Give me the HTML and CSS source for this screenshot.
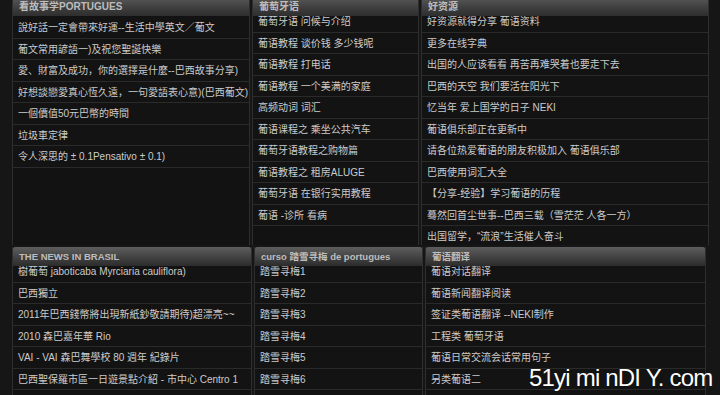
FILE: index.html
```html
<!DOCTYPE html>
<html lang="zh">
<head>
    <meta charset="UTF-8">
    <meta name="viewport" content="width=device-width, initial-scale=1.0">
    <title>葡语资源</title>
    <link rel="stylesheet" href="styles.css">
</head>
<body>
    <div class="page">
        <div class="row-top">
            <div class="panel">
                <div class="panel-head">看故事学PORTUGUES</div>
                <ul class="list">
                    <li>說好話一定會帶來好運--生活中學英文／葡文</li>
                    <li>葡文常用諺語一)及祝您聖誕快樂</li>
                    <li>愛、財富及成功，你的選擇是什麼--巴西故事分享)</li>
                    <li>好想談戀愛真心恆久遠，一句愛語表心意)(巴西葡文)</li>
                    <li>一個價值50元巴幣的時間</li>
                    <li>垃圾車定律</li>
                    <li>令人深思的 ± 0.1Pensativo ± 0.1)</li>
                </ul>
            </div>
            <div class="panel">
                <div class="panel-head">葡萄牙语</div>
                <ul class="list list-up">
                    <li>葡萄牙语 问候与介绍</li>
                    <li>葡语教程 谈价钱 多少钱呢</li>
                    <li>葡语教程 打电话</li>
                    <li>葡语教程 一个美满的家庭</li>
                    <li>高频动词 词汇</li>
                    <li>葡语课程之 乘坐公共汽车</li>
                    <li>葡萄牙语教程之购物篇</li>
                    <li>葡语教程之 租房ALUGE</li>
                    <li>葡萄牙语 在银行实用教程</li>
                    <li>葡语 -诊所 看病</li>
                </ul>
            </div>
            <div class="panel">
                <div class="panel-head">好资源</div>
                <ul class="list list-up">
                    <li>好资源就得分享 葡语资料</li>
                    <li>更多在线字典</li>
                    <li>出国的人应该看看 再苦再难哭着也要走下去</li>
                    <li>巴西的天空 我们要活在阳光下</li>
                    <li>忆当年 爱上国学的日子 NEKI</li>
                    <li>葡语俱乐部正在更新中</li>
                    <li>请各位热爱葡语的朋友积极加入 葡语俱乐部</li>
                    <li>巴西使用词汇大全</li>
                    <li>【分享-经验】学习葡语的历程</li>
                    <li>蓦然回首尘世事--巴西三载（雪茫茫 人各一方）</li>
                    <li>出国留学，“流浪”生活催人奋斗</li>
                </ul>
            </div>
        </div>

        <div class="row-bottom">
            <div class="panel">
                <div class="panel-head head-big">THE NEWS IN BRASIL</div>
                <ul class="list list-up">
                    <li>樹葡萄 jaboticaba Myrciaria cauliflora)</li>
                    <li>巴西獨立</li>
                    <li>2011年巴西錢幣將出現新紙鈔敬請期待)超漂亮~~</li>
                    <li>2010 森巴嘉年華 Rio</li>
                    <li>VAI - VAI 森巴舞學校 80 週年 紀錄片</li>
                    <li>巴西聖保羅市區一日遊景點介紹 - 市中心 Centro 1</li>
                </ul>
            </div>
            <div class="panel">
                <div class="panel-head head-big">curso 踏雪寻梅 de portugues</div>
                <ul class="list list-up">
                    <li>踏雪寻梅1</li>
                    <li>踏雪寻梅2</li>
                    <li>踏雪寻梅3</li>
                    <li>踏雪寻梅4</li>
                    <li>踏雪寻梅5</li>
                    <li>踏雪寻梅6</li>
                </ul>
            </div>
            <div class="panel">
                <div class="panel-head head-big">葡语翻译</div>
                <ul class="list list-up">
                    <li>葡语对话翻译</li>
                    <li>葡语新闻翻译阅读</li>
                    <li>签证类葡语翻译 --NEKI制作</li>
                    <li>工程类 葡萄牙语</li>
                    <li>葡语日常交流会话常用句子</li>
                    <li>另类葡语二</li>
                </ul>
            </div>
        </div>
    </div>

    <div class="watermark">51yi mi nDI Y. com</div>
</body>
</html>
```

FILE: styles.css
```css
body {
    margin: 0;
    padding: 0;
    background-color: #161616;
    color: #cbcbcb;
    font-family: "Liberation Sans", "Noto Sans CJK SC", sans-serif;
    font-size: 10px;
    overflow: hidden;
}
.page {
    padding-left: 12px;
    height: 395px;
}
.row-top {
    display: grid;
    grid-template-columns: 238px 167px 288px;
    gap: 2px;
    height: 245px;
}
.row-bottom {
    display: grid;
    grid-template-columns: 240px 169px 281px;
    gap: 2px;
    margin-top: 2px;
    height: 148px;
}
.panel {
    background: #121212;
    border-left: 1px solid #2e2e2e;
    border-right: 1px solid #2e2e2e;
    overflow: hidden;
}
.panel-head {
    position: relative;
    z-index: 1;
    height: 16px;
    line-height: 14px;
    padding-left: 6px;
    font-weight: bold;
    color: #bdbdbd;
    background: linear-gradient(#525252, #3c3c3c 55%, #2e2e2e);
}
.head-big {
    height: 19px;
    line-height: 19px;
    font-size: 9.5px;
    background: linear-gradient(#5e5e5e, #444444 50%, #2c2c2c);
    border-radius: 2px 2px 0 0;
}
.list {
    list-style: none;
    margin: 1px 0 0;
    padding: 0;
}
.list-up {
    margin-top: -5px;
}
.list li {
    box-sizing: border-box;
    height: 21.5px;
    line-height: 21px;
    padding-left: 5px;
    border-bottom: 1px solid #2a2a2a;
    background: #131313;
    white-space: nowrap;
}
.watermark {
    position: absolute;
    left: 529px;
    top: 365px;
    font-family: "Liberation Sans", sans-serif;
    font-size: 24px;
    line-height: 26px;
    letter-spacing: -0.8px;
    color: #ffffff;
    white-space: pre;
    text-shadow: 0 0 1px #000;
}
```
